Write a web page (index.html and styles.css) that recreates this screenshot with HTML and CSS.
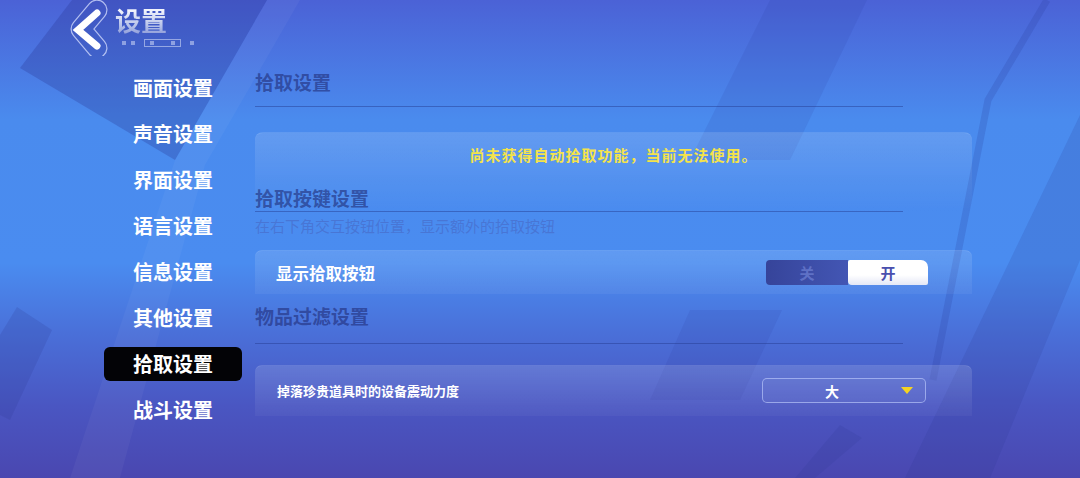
FILE: index.html
```html
<!DOCTYPE html>
<html lang="zh-CN">
<head>
    <meta charset="UTF-8">
    <meta name="viewport" content="width=device-width, initial-scale=1.0">
    <title>设置</title>
    <link rel="stylesheet" href="styles.css">
</head>
<body>
    <div class="screen">
        <!-- 背景斜条纹 -->
        <svg class="backdrop" width="1080" height="478" viewBox="0 0 1080 478">
            <polygon points="20,68 72,0 267,0 175,160" fill="#26318f" opacity="0.28"/>
            <polygon points="175,160 267,0 300,0 205,165 120,478 70,478" fill="#ffffff" opacity="0.04"/>
            <polygon points="770,0 867,0 790,160 690,160" fill="#2a3a9a" opacity="0.12"/>
            <polyline points="1047,0 988,100 933,380" fill="none" stroke="#2a3a9a" stroke-width="7" opacity="0.2"/>
            <polygon points="1080,115 1080,260 990,478 905,478" fill="#2a3590" opacity="0.15"/>
            <polygon points="690,310 782,310 740,400 650,400" fill="#2a3590" opacity="0.1"/>
            <polygon points="840,425 862,438 815,478 795,478" fill="#2a3590" opacity="0.15"/>
            <polygon points="17,307 52,330 10,420 0,415 0,335" fill="#2a3590" opacity="0.18"/>
        </svg>

        <header class="topbar">
            <svg class="back-btn" width="46" height="56" viewBox="60 0 46 56">
                <mask id="ring">
                    <rect x="60" y="0" width="46" height="56" fill="black"/>
                    <polyline points="95,10 79,29 95,48" fill="none" stroke="white" stroke-width="21" stroke-linecap="round" stroke-linejoin="round"/>
                    <polyline points="95,10 79,29 95,48" fill="none" stroke="black" stroke-width="18.6" stroke-linecap="round" stroke-linejoin="round"/>
                </mask>
                <rect x="60" y="0" width="46" height="56" fill="#d8e0ff" opacity="0.75" mask="url(#ring)"/>
                <polyline points="95,13 76,30 95,46" fill="none" stroke="#ffffff" stroke-width="7" stroke-linecap="round" stroke-linejoin="miter"/>
            </svg>
            <div class="title-block">
                <div class="title">设置</div>
                <div class="title-deco">
                    <i></i><i></i>
                    <span class="deco-box"><i></i><i></i></span>
                    <i></i>
                </div>
            </div>
        </header>

        <div class="layout">
            <nav class="menu">
                <div class="menu-item">画面设置</div>
                <div class="menu-item">声音设置</div>
                <div class="menu-item">界面设置</div>
                <div class="menu-item">语言设置</div>
                <div class="menu-item">信息设置</div>
                <div class="menu-item">其他设置</div>
                <div class="menu-item active">拾取设置</div>
                <div class="menu-item">战斗设置</div>
            </nav>

            <main class="panel">
                <h2 class="section-title">拾取设置</h2>

                <div class="notice">
                    <p class="notice-text">尚未获得自动拾取功能，当前无法使用。</p>
                    <h2 class="section-title sub">拾取按键设置</h2>
                </div>
                <p class="desc">在右下角交互按钮位置，显示额外的拾取按钮</p>

                <div class="row">
                    <span class="row-label">显示拾取按钮</span>
                    <div class="toggle">
                        <span class="toggle-off">关</span>
                        <span class="toggle-on">开</span>
                    </div>
                </div>

                <h2 class="section-title filter">物品过滤设置</h2>

                <div class="row row-select">
                    <span class="row-label small">掉落珍贵道具时的设备震动力度</span>
                    <div class="select">
                        <span class="select-value">大</span>
                        <span class="select-arrow"></span>
                    </div>
                </div>
            </main>
        </div>
    </div>
</body>
</html>
```

FILE: styles.css
```css
body {
    margin: 0;
    font-family: "Noto Sans CJK SC", "Noto Sans", sans-serif;
    overflow: hidden;
}

.screen {
    width: 1080px;
    height: 478px;
    position: relative;
    overflow: hidden;
    display: flex;
    flex-direction: column;
    background: linear-gradient(180deg, #4b62d6 0%, #4a8bee 25%, #4a8cf0 55%, #4a6fd8 70%, #4a56c2 85%, #4a47b0 100%);
}

.backdrop {
    position: absolute;
    top: 0;
    left: 0;
}

/* 顶部返回 + 标题 */
.topbar {
    position: relative;
    height: 60px;
    display: flex;
    align-items: flex-start;
    padding-left: 62px;
    box-sizing: border-box;
}

.back-btn {
    display: block;
}

.title-block {
    margin-left: 7px;
    padding-top: 4px;
}

.title {
    font-size: 26px;
    line-height: 32px;
    font-weight: 700;
    background: linear-gradient(180deg, #f2f4fc 20%, #b3bfe8 70%, #8796d6 100%);
    -webkit-background-clip: text;
    background-clip: text;
    color: transparent;
}

.title-deco {
    display: flex;
    align-items: center;
    gap: 5px;
    margin-top: 3px;
    margin-left: 7px;
}

.title-deco i {
    display: block;
    width: 4px;
    height: 4px;
    background: rgba(205, 215, 245, 0.55);
}

.title-deco .deco-box {
    display: flex;
    justify-content: space-between;
    align-items: center;
    width: 37px;
    height: 8px;
    box-sizing: border-box;
    padding: 0 5px;
    margin: 0 4px;
    border: 1px solid rgba(205, 215, 245, 0.6);
}

/* 左侧菜单 */
.layout {
    position: relative;
    display: flex;
    flex: 1;
}

.menu {
    width: 138px;
    margin-left: 104px;
    padding-top: 11px;
    display: flex;
    flex-direction: column;
    gap: 12px;
}

.menu-item {
    height: 34px;
    line-height: 34px;
    padding-left: 29px;
    font-size: 20px;
    font-weight: 700;
    color: #ffffff;
    border-radius: 6px;
}

.menu-item.active {
    background: #030306;
}

/* 右侧内容 */
.panel {
    width: 717px;
    margin-left: 13px;
    padding-top: 10px;
}

.section-title {
    width: 648px;
    margin: 0 0 25px;
    padding-bottom: 12px;
    font-size: 19px;
    line-height: 24px;
    font-weight: 700;
    color: rgba(32, 45, 120, 0.62);
    border-bottom: 1px solid rgba(35, 55, 140, 0.45);
}

.notice {
    border-radius: 8px 8px 0 0;
    padding-top: 12px;
    background: linear-gradient(180deg, rgba(255, 255, 255, 0.14) 0%, rgba(255, 255, 255, 0.06) 55%, rgba(255, 255, 255, 0) 100%);
    border-top: 1px solid rgba(255, 255, 255, 0.12);
}

.notice-text {
    margin: 0;
    font-size: 15px;
    letter-spacing: 1px;
    line-height: 20px;
    font-weight: 700;
    text-align: center;
    color: #f4e34a;
}

.section-title.sub {
    margin: 21px 0 0;
    padding-bottom: 1px;
}

.desc {
    margin: 5px 0 0;
    font-size: 15px;
    line-height: 18px;
    color: rgba(70, 90, 180, 0.45);
}

.row {
    margin-top: 15px;
    display: flex;
    align-items: center;
    justify-content: space-between;
    padding: 9px 44px 9px 21px;
    border-radius: 7px 7px 0 0;
    border-top: 1px solid rgba(255, 255, 255, 0.12);
    background: linear-gradient(180deg, rgba(255, 255, 255, 0.13) 0%, rgba(255, 255, 255, 0.05) 100%);
}

.row-label {
    font-size: 16.5px;
    font-weight: 700;
    color: #ffffff;
}

.row-label.small {
    font-size: 13px;
}

.toggle {
    display: flex;
    width: 162px;
    height: 25px;
    font-size: 15px;
    font-weight: 700;
    line-height: 25px;
    text-align: center;
}

.toggle-off {
    width: 82px;
    border-radius: 4px 0 0 4px;
    background: linear-gradient(90deg, #36449a, #4356b4);
    color: rgba(125, 145, 225, 0.55);
}

.toggle-on {
    width: 80px;
    border-radius: 2px 7px 2px 4px;
    background: linear-gradient(180deg, #ffffff 60%, #e4e7f6 100%);
    color: #4a4fae;
}

.section-title.filter {
    margin: 10px 0 0;
    padding-bottom: 15px;
}

.row-select {
    margin-top: 21px;
    padding: 12px 46px 13px 22px;
    background: linear-gradient(180deg, rgba(255, 255, 255, 0.14) 0%, rgba(255, 255, 255, 0.04) 100%);
}

.select {
    display: flex;
    align-items: center;
    width: 164px;
    height: 25px;
    box-sizing: border-box;
    border: 1.5px solid rgba(195, 208, 255, 0.6);
    border-radius: 5px;
    background: rgba(255, 255, 255, 0.04);
}

.select-value {
    flex: 1;
    text-align: center;
    font-size: 14px;
    font-weight: 700;
    color: #ffffff;
}

.select-arrow {
    width: 0;
    height: 0;
    margin-right: 12px;
    border-left: 6px solid transparent;
    border-right: 6px solid transparent;
    border-top: 7px solid #f5d321;
}
```
